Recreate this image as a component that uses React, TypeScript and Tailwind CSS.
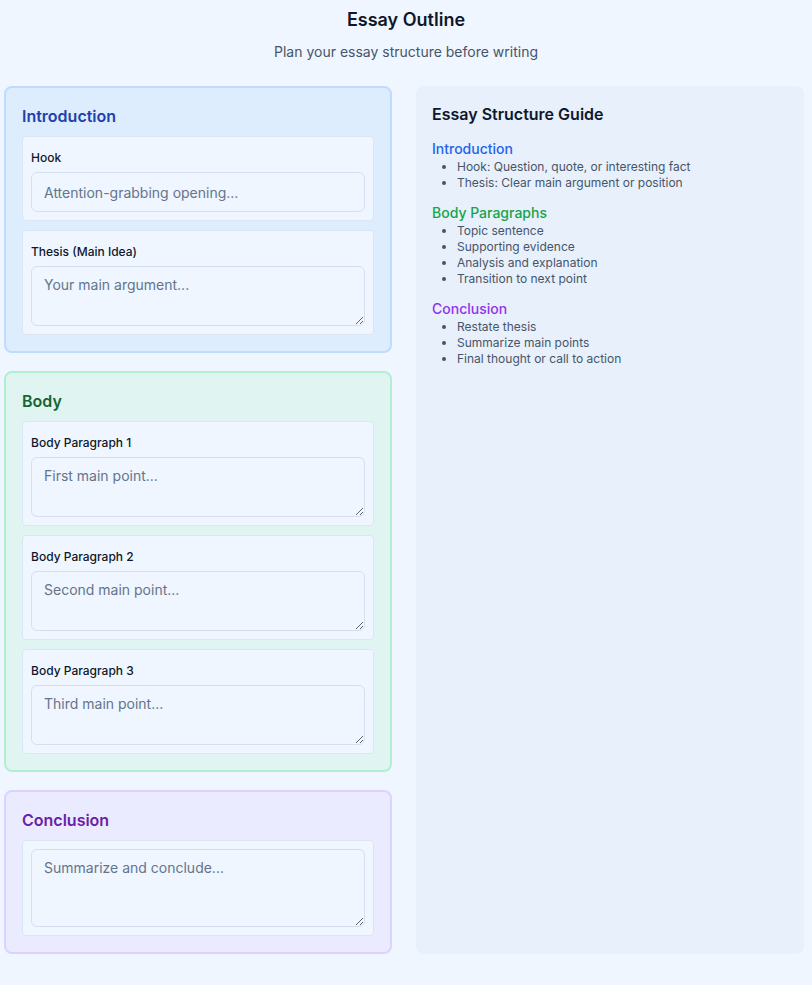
import { useState } from "react";

type Field = { key: string; label?: string; placeholder: string; kind: "input" | "area"; rows?: number };

const sections = [
  {
    title: "Introduction",
    box: "bg-[#deedfd] border-[#bfdbfe]",
    head: "text-[#1e40af]",
    fields: [
      { key: "hook", label: "Hook", placeholder: "Attention-grabbing opening...", kind: "input" },
      { key: "thesis", label: "Thesis (Main Idea)", placeholder: "Your main argument...", kind: "area" },
    ] as Field[],
  },
  {
    title: "Body",
    box: "bg-[#e0f5f1] border-[#b1efd3]",
    head: "text-[#166534]",
    fields: [
      { key: "p1", label: "Body Paragraph 1", placeholder: "First main point...", kind: "area" },
      { key: "p2", label: "Body Paragraph 2", placeholder: "Second main point...", kind: "area" },
      { key: "p3", label: "Body Paragraph 3", placeholder: "Third main point...", kind: "area" },
    ] as Field[],
  },
  {
    title: "Conclusion",
    box: "bg-[#eaebfe] border-[#dcd3fd]",
    head: "text-[#6b21a8]",
    fields: [
      { key: "conclusion", placeholder: "Summarize and conclude...", kind: "area", rows: 3 },
    ] as Field[],
  },
];

const guide = [
  {
    title: "Introduction",
    color: "text-[#2563eb]",
    items: ["Hook: Question, quote, or interesting fact", "Thesis: Clear main argument or position"],
  },
  {
    title: "Body Paragraphs",
    color: "text-[#16a34a]",
    items: ["Topic sentence", "Supporting evidence", "Analysis and explanation", "Transition to next point"],
  },
  {
    title: "Conclusion",
    color: "text-[#9333ea]",
    items: ["Restate thesis", "Summarize main points", "Final thought or call to action"],
  },
];

export default function App() {
  const [values, setValues] = useState<Record<string, string>>({});

  const update = (key: string, value: string) => {
    setValues(prev => ({ ...prev, [key]: value }));
  };

  return (
    <div className="min-h-screen bg-[#eff6ff] font-['Inter',sans-serif] text-[#0f172a]">
      {/* Header */}
      <div className="pt-[9px] text-center">
        <h1 className="text-lg font-semibold leading-[22px]">Essay Outline</h1>
        <p className="mt-[11px] text-sm text-[#475569]">Plan your essay structure before writing</p>
      </div>

      <div className="mt-[24px] grid grid-cols-[388px_388px] gap-6 pl-1">
        {/* Outline sections */}
        <div className="flex flex-col gap-[18px]">
          {sections.map(section => (
            <div key={section.title} className={`rounded-lg border-2 p-4 ${section.box}`}>
              <h2 className={`mb-2 text-base font-semibold leading-6 ${section.head}`}>{section.title}</h2>
              <div className="flex flex-col gap-[9px]">
                {section.fields.map(field => (
                  <div key={field.key} className="rounded border border-[#dbe6f5] bg-[#eff6ff] p-2">
                    {field.label && (
                      <label className="mb-[3px] block pt-[2px] text-xs font-medium leading-[22px] text-[#0f172a]">
                        {field.label}
                      </label>
                    )}
                    {field.kind === "input" ? (
                      <input
                        value={values[field.key] || ""}
                        onChange={e => update(field.key, e.target.value)}
                        placeholder={field.placeholder}
                        className="block h-10 w-full rounded-md border border-[#d4e0f0] bg-[#eff6ff] px-3 text-sm placeholder:text-[#64748b] focus:outline-none"
                      />
                    ) : (
                      <textarea
                        value={values[field.key] || ""}
                        onChange={e => update(field.key, e.target.value)}
                        placeholder={field.placeholder}
                        rows={field.rows || 2}
                        className={`block w-full rounded-md border border-[#d4e0f0] bg-[#eff6ff] px-3 py-2 text-sm leading-5 placeholder:text-[#64748b] focus:outline-none ${
                          field.rows ? "h-[78px]" : "h-[60px]"
                        }`}
                      />
                    )}
                  </div>
                ))}
              </div>
            </div>
          ))}
        </div>

        {/* Guide */}
        <div className="rounded-lg bg-[#e7f0fb] p-4">
          <h3 className="text-base font-semibold leading-6 text-[#0f172a]">Essay Structure Guide</h3>
          <div className="mt-[13px] flex flex-col gap-3">
            {guide.map(g => (
              <div key={g.title}>
                <h4 className={`text-sm font-medium leading-5 ${g.color}`}>{g.title}</h4>
                <ul className="list-disc pl-[25px] text-xs leading-4 text-[#475569]">
                  {g.items.map(item => (
                    <li key={item}>{item}</li>
                  ))}
                </ul>
              </div>
            ))}
          </div>
        </div>
      </div>
      <div className="h-8" />
    </div>
  );
}
